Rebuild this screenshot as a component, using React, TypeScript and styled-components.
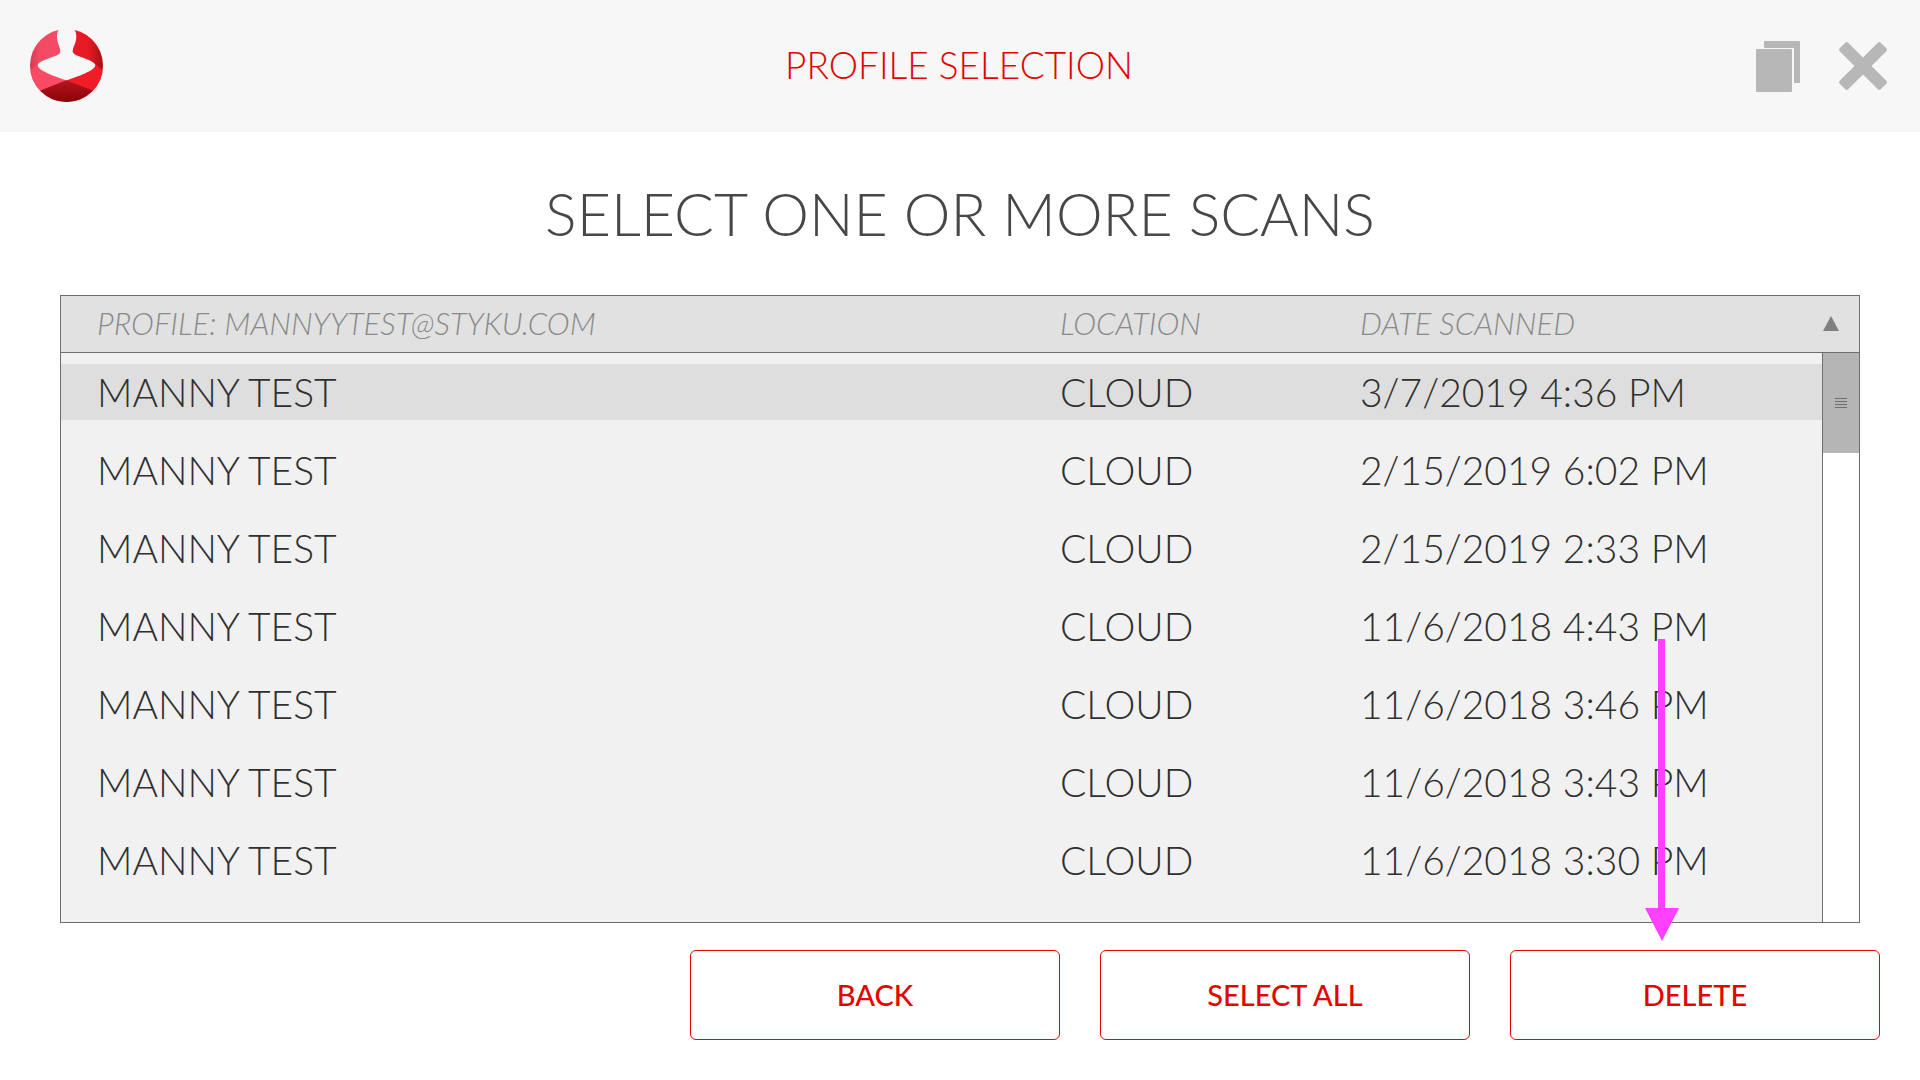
import React, { useState } from "react";
import styled, { createGlobalStyle } from "styled-components";

const GlobalStyle = createGlobalStyle`
  *, *::before, *::after { box-sizing: border-box; }
  body {
    margin: 0;
    background: #fff;
    color: #3a3a3a;
    font-family: Lato, "Open Sans", sans-serif;
  }
`;

const line = "#6e6e6e";
const red = "#e10600";

const Page = styled.div`
  display: flex;
  flex-direction: column;
`;

const TopBar = styled.header`
  display: grid;
  grid-template-columns: 1fr auto 1fr;
  align-items: center;
  height: 132px;
  padding: 0 32px 0 30px;
  background: #f7f7f7;
`;

const TopTitle = styled.h1`
  margin: 0;
  padding-bottom: 2px;
  color: ${red};
  font-size: 37px;
  font-weight: 300;
  line-height: 44px;
`;

const Tools = styled.div`
  display: flex;
  justify-content: flex-end;
  align-items: center;
  gap: 38px;
`;

const ToolButton = styled.button`
  display: flex;
  padding: 0;
  border: 0;
  background: none;
  cursor: pointer;
`;

const Content = styled.main`
  display: flex;
  flex-direction: column;
  padding: 0 60px;
`;

const Heading = styled.h2`
  margin: 46px 0 45px;
  color: #474747;
  font-size: 59px;
  font-weight: 300;
  line-height: 72px;
  text-align: center;
`;

const Panel = styled.section`
  position: relative;
  display: flex;
  border: 1px solid ${line};
  background: #e1e1e1;
`;

const ScanTable = styled.table`
  display: block;
  flex: 1;
`;

const Head = styled.thead`
  display: block;
  border-bottom: 1px solid ${line};
`;

const Body = styled.tbody`
  display: flex;
  flex-direction: column;
  gap: 22px;
  padding: 11px 0 34px;
  background: #f1f1f1;
`;

const Row = styled.tr<{ $selected?: boolean }>`
  display: grid;
  grid-template-columns: 1fr 300px 462px;
  align-items: center;
  height: 56px;
  padding-left: 36px;
  background: ${(p) => (p.$selected ? "#dedede" : "transparent")};
`;

const HeadCell = styled.th`
  padding: 0 0 2px;
  color: #8a8a8a;
  font-size: 31px;
  font-style: italic;
  font-weight: 300;
  line-height: 36px;
  text-align: left;
`;

const Cell = styled.td`
  padding: 0;
  color: #303030;
  font-size: 39px;
  font-weight: 300;
  line-height: 48px;
`;

const Rail = styled.div`
  display: flex;
  flex-direction: column;
  width: 37px;
`;

const SortButton = styled.button`
  display: flex;
  align-items: center;
  height: 57px;
  padding: 0 0 2px;
  border: 0;
  border-bottom: 1px solid ${line};
  background: none;
  cursor: pointer;
`;

const Track = styled.div`
  flex: 1;
  border-left: 1px solid ${line};
  background: #fff;
`;

const Thumb = styled.div`
  display: flex;
  flex-direction: column;
  align-items: center;
  justify-content: center;
  gap: 2px;
  height: 100px;
  background: #b5b5b5;
`;

const Grip = styled.span`
  width: 12px;
  height: 1px;
  background: #6e6e6e;
`;

const Pointer = styled.svg`
  position: absolute;
  right: 180px;
  bottom: -19px;
  pointer-events: none;
`;

const Actions = styled.footer`
  display: flex;
  justify-content: flex-end;
  gap: 40px;
  padding: 27px 40px 40px;
`;

const ActionButton = styled.button`
  width: 370px;
  height: 90px;
  padding: 0 0 2px;
  border: 1px solid ${red};
  border-radius: 6px;
  background: #fff;
  color: ${red};
  font-family: inherit;
  font-size: 29px;
  font-weight: 500;
  cursor: pointer;
`;

const dates = [
  "3/7/2019 4:36 PM",
  "2/15/2019 6:02 PM",
  "2/15/2019 2:33 PM",
  "11/6/2018 4:43 PM",
  "11/6/2018 3:46 PM",
  "11/6/2018 3:43 PM",
  "11/6/2018 3:30 PM",
];

function Logo() {
  return (
    <svg width="73" height="74" viewBox="90 88 219 222" role="img" aria-label="Styku">
      <defs>
        <clipPath id="disc"><circle cx="199.500" cy="197.500" r="109.500" /></clipPath>
        <linearGradient id="pink" x1="0" y1="0" x2="1" y2="0">
          <stop offset="0" stopColor="#d63a50" />
          <stop offset="0.250" stopColor="#f24a62" />
          <stop offset="1" stopColor="#fb4a66" />
        </linearGradient>
        <linearGradient id="red" x1="0" y1="0" x2="1" y2="0">
          <stop offset="0" stopColor="#ee1b26" />
          <stop offset="0.600" stopColor="#e41a24" />
          <stop offset="1" stopColor="#a80f17" />
        </linearGradient>
        <linearGradient id="base" x1="0" y1="0" x2="0" y2="1">
          <stop offset="0" stopColor="#b5171f" />
          <stop offset="1" stopColor="#8c0006" />
        </linearGradient>
      </defs>
      <g clipPath="url(#disc)">
        <rect x="90" y="88" width="110" height="219" fill="url(#pink)" />
        <rect x="199" y="88" width="110" height="219" fill="url(#red)" />
        <path d="M90 218Q95 205 116 193L118 202Q128 218 199 242L123 272L90 290Z" fill="#fa4a66" />
        <path d="M309 218Q304 205 284 193L282 202Q270 218 199 242L276 272L309 290Z" fill="#f01c28" />
        <path d="M199 242L276 272L309 307H90L123 272Z" fill="url(#base)" />
      </g>
      <path
        d="M179 86Q170 95 171 112C172 135 181 141 181 156Q179 164 165 169C145 176 113 188 113 196C114 212 155 227 199 242C244 227 285 212 286 196C286 188 255 176 235 169Q221 164 218 156C218 141 228 135 229 112Q230 95 220 86Z"
        fill="#f7f7f7"
      />
    </svg>
  );
}

export default function App() {
  const [selected, setSelected] = useState<number[]>([0]);
  const toggle = (i: number) =>
    setSelected((s) => (s.includes(i) ? s.filter((n) => n !== i) : [...s, i]));

  return (
    <Page>
      <GlobalStyle />
      <TopBar>
        <Logo />
        <TopTitle>PROFILE SELECTION</TopTitle>
        <Tools>
          <ToolButton type="button" aria-label="Restore window">
            <svg width="44" height="51" viewBox="0 0 44 51" fill="#b7b7b7">
              <path d="M9 0H43Q44 0 44 1V41Q44 42 43 42H39Q38 42 38 41V7H9Q8 7 8 6V1Q8 0 9 0Z" />
              <rect x="0" y="8" width="36" height="43" rx="1" />
            </svg>
          </ToolButton>
          <ToolButton type="button" aria-label="Close">
            <svg width="50" height="50" viewBox="0 0 50 50" fill="#b7b7b7">
              <g transform="rotate(45 25 25)">
                <rect x="-4" y="19" width="58" height="12" rx="2" />
                <rect x="19" y="-4" width="12" height="58" rx="2" />
              </g>
            </svg>
          </ToolButton>
        </Tools>
      </TopBar>

      <Content>
        <Heading>SELECT ONE OR MORE SCANS</Heading>
        <Panel>
          <ScanTable>
            <Head>
              <Row>
                <HeadCell scope="col">PROFILE: MANNYYTEST@STYKU.COM</HeadCell>
                <HeadCell scope="col">LOCATION</HeadCell>
                <HeadCell scope="col">DATE SCANNED</HeadCell>
              </Row>
            </Head>
            <Body>
              {dates.map((date, i) => (
                <Row key={date} $selected={selected.includes(i)} onClick={() => toggle(i)}>
                  <Cell>MANNY TEST</Cell>
                  <Cell>CLOUD</Cell>
                  <Cell>{date}</Cell>
                </Row>
              ))}
            </Body>
          </ScanTable>
          <Rail>
            <SortButton type="button" aria-label="Sort by date scanned">
              <svg width="18" height="16" viewBox="0 0 18 16" fill="#808080">
                <path d="M9 1L17 16H1Z" />
              </svg>
            </SortButton>
            <Track>
              <Thumb>
                <Grip />
                <Grip />
                <Grip />
                <Grip />
              </Thumb>
            </Track>
          </Rail>
          <Pointer width="34" height="302" viewBox="0 0 34 302" fill="#ff40ff" aria-hidden="true">
            <path d="M13 0H20V269H34L17 302L0 269H13Z" />
          </Pointer>
        </Panel>
      </Content>

      <Actions>
        <ActionButton type="button">BACK</ActionButton>
        <ActionButton type="button">SELECT ALL</ActionButton>
        <ActionButton type="button" onClick={() => setSelected([])}>DELETE</ActionButton>
      </Actions>
    </Page>
  );
}
